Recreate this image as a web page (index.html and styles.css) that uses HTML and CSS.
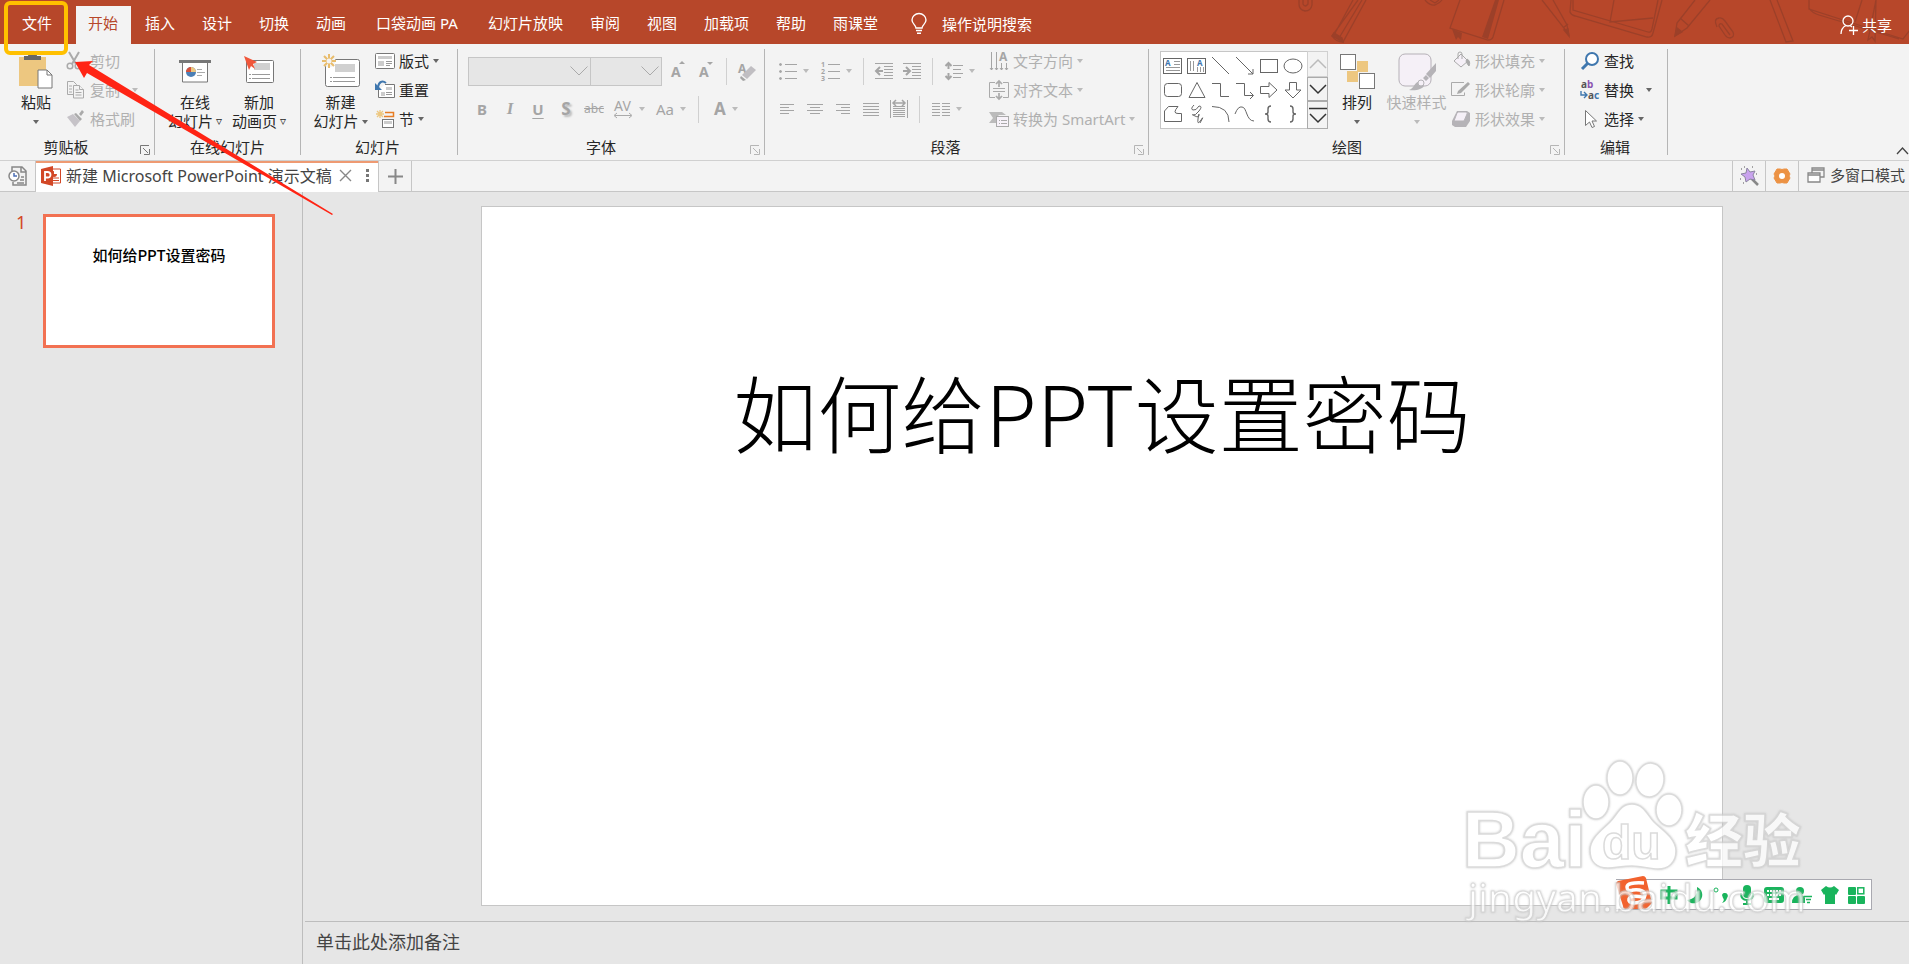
FILE: index.html
```html
<!DOCTYPE html>
<html lang="zh-CN">
<head>
  <meta charset="UTF-8">
  <meta name="viewport" content="width=device-width, initial-scale=1.0">
  <title>新建 Microsoft PowerPoint 演示文稿</title>
  <link rel="stylesheet" href="styles.css">
</head>
<body>

<header class="titlebar">
  <svg class="doodles" width="620" height="44" viewBox="1289 0 620 44" fill="none" stroke="#9c4029" stroke-width="1.3">
    <path d="M1299 0v4q0 6 6 7q6 0 7-6V0M1303 0v4q2 4 5 0V0"/>
    <path d="M1358 0L1332 36q4 6 11 6L1366 0M1353 0L1334 35M1362 0L1339 38"/>
    <path d="M1332 36l11 6-1-4-8-5z" fill="#9c4029"/>
    <path d="M1425 0q5 6 10 5q5-2 7-5M1430 0l5 3 4-3"/>
    <path d="M1460 0L1450 28l38 12q4 0 5-3L1504 0"/>
    <path d="M1495 0L1482 37l6 2L1499 0zM1452 29l10 4-1 7-3-3-2 3z" fill="#9c4029" stroke="none"/>
    <path d="M1542 0l22 28 5 8-2-11L1553 0M1563 28l5-4"/>
    <path d="M1564 30l5 6-1-7z" fill="#9c4029"/>
    <path d="M1571 0l-1 12q1 3 5 4l72 21q5 1 6-4L1662 0M1573 0v10l75 22q3 1 4-3L1658 0M1614 0l-4 22 43-4"/>
    <path d="M1695 0l-18 23-2 13 12-8L1710 0M1680 18l9 8"/>
    <path d="M1677 28l-2 8 7-4z" fill="#9c4029"/>
    <path d="M1717 27q-4-8 2-9q3-1 6 3l8 11q2 5-3 6q-3 0-5-3l-6-9q0-3 3-2l8 11"/>
    <path d="M1770 0l16 42 7-1L1777 0"/>
    <path d="M1809 0v9l34 11 60 19 7-9M1809 8q3 5 10 7l80 24M1862 0l-7 22M1876 0l-8 40 4-3 3 4 1-41"/>
  </svg>
  <nav class="tabs">
    <button class="tab">文件</button>
    <button class="tab active">开始</button>
    <button class="tab">插入</button>
    <button class="tab">设计</button>
    <button class="tab">切换</button>
    <button class="tab">动画</button>
    <button class="tab wide">口袋动画 PA</button>
    <button class="tab">幻灯片放映</button>
    <button class="tab">审阅</button>
    <button class="tab">视图</button>
    <button class="tab">加载项</button>
    <button class="tab">帮助</button>
    <button class="tab">雨课堂</button>
  </nav>
  <button class="tell-me">
    <svg width="16" height="22" viewBox="0 0 16 22" fill="none" stroke="#fff" stroke-width="1.4"><path d="M5 15c0-3-4-4-4-8a7 6.500 0 0 1 14 0c0 4-4 5-4 8zM5 17.500h6M6 20.300h4"/></svg>
    操作说明搜索
  </button>
  <button class="share">
    <svg width="18" height="20" viewBox="0 0 18 20" fill="none" stroke="#fff" stroke-width="1.300"><circle cx="8" cy="6" r="5"/><path d="M1 19c0-4 2-7 5-8.500M10 10.500l2 1.500M9 15.500h9M13.500 11v9"/></svg>
    共享
  </button>
</header>

<section class="ribbon">
  <div class="group clipboard">
    <div class="group-body">
      <button class="big">
        <svg width="36" height="38" viewBox="0 0 36 38"><path d="M1 5h27v29H1z" fill="#edc780"/><path d="M6 8V4h4q0-3 4.500-3T19 4h4v4z" fill="#666"/><path d="M20 18h9l5 5v13H20z" fill="#fff" stroke="#777"/><path d="M29 18v5h5" fill="none" stroke="#777"/></svg>
        <span>粘贴</span>
        <span><i class="caret"></i></span>
      </button>
      <div class="rows">
        <button class="tool off">
          <svg width="20" height="20" viewBox="0 0 20 20" fill="none" stroke="#aaa" stroke-width="1.500"><circle cx="4" cy="15" r="2.800"/><circle cx="12" cy="15" r="2.800"/><path d="M13 1L6 13M3 1l7 12" stroke-width="2"/></svg>剪切</button>
        <button class="tool off">
          <svg width="20" height="20" viewBox="0 0 20 20" fill="#f3f3f3" stroke="#aaa"><path d="M1.500 1.500h6l3 3v10h-9z"/><path d="M7.500 5.500h6l4 4v8.500h-10z"/><path d="M13.500 5.500v4h4M3 6h3M3 9h3M3 12h3M9.500 10h3M9.500 12.500h6M9.500 15h6"/></svg>复制<i class="caret gap"></i></button>
        <button class="tool off">
          <svg width="20" height="20" viewBox="0 0 20 20"><path d="M1 8l6-3 7 7-5 6z" fill="#c6c3c8"/><path d="M8 5l2-1 6 6-2 2zM13 5l3-4 2 2-3 4z" fill="#aaa"/></svg>格式刷</button>
      </div>
    </div>
    <div class="group-name">剪贴板</div>
    <button class="launcher dark" aria-label="剪贴板选项"><svg width="10" height="10" viewBox="0 0 10 10" fill="none" stroke="currentColor"><path d="M.5 9V.5H9M3 3l5 5M9.500 4v5.500H4"/></svg></button>
  </div>

  <div class="group online">
    <div class="group-body">
      <button class="big">
        <svg width="32" height="32" viewBox="0 0 32 32"><path d="M0 5h32v3H0z" fill="#777"/><path d="M3.500 8v19h25V8" fill="#fff" stroke="#777"/><circle cx="12" cy="17" r="5" fill="#4c7fb5"/><path d="M12 17v-5a5 5 0 0 0-5 5z" fill="#d4503a"/><path d="M12 17v-5a5 5 0 0 1 5 5z" fill="#edc780"/><path d="M18 14.500h5M18 17.500h8M18 20.500h5" stroke="#aaa"/></svg>
        <span>在线</span>
        <span>幻灯片 <small>▿</small></span>
      </button>
      <button class="big">
        <svg width="32" height="32" viewBox="0 0 32 32"><rect x="3.500" y="5.500" width="27" height="22" rx="1" fill="#fff" stroke="#777"/><path d="M11 8h16v7H11z" fill="#d0d0d0"/><path d="M6 19.500h21M6 23.500h21" stroke="#999" stroke-dasharray="2 1 30"/><path d="M1 1l13 6-4 2 2 5-4-3-2 4z" fill="#f0563a"/></svg>
        <span>新加</span>
        <span>动画页 <small>▿</small></span>
      </button>
    </div>
    <div class="group-name">在线幻灯片</div>
  </div>

  <div class="group slides">
    <div class="group-body">
      <button class="big">
        <svg width="38" height="36" viewBox="0 0 38 36"><rect x="3.500" y="6.500" width="34" height="27" rx="2" fill="#fff" stroke="#777"/><path d="M13 11h20v8H13z" fill="#d0d0d0"/><path d="M8 24.500h25M8 28.500h25" stroke="#999" stroke-dasharray="2 1 30"/><circle cx="7" cy="8" r="6.500" fill="#f3f3f3"/><path d="M7 1v14M0 8h14M2 3l10 10M12 3L2 13" stroke="#e8bc6c" stroke-width="2"/><circle cx="7" cy="8" r="2.500" fill="#f3f3f3"/></svg>
        <span>新建</span>
        <span>幻灯片<i class="caret"></i></span>
      </button>
      <div class="rows">
        <button class="tool">
          <svg width="20" height="20" viewBox="0 0 20 20"><rect x=".500" y="2.500" width="19" height="15" rx="1" fill="#fff" stroke="#777"/><path d="M3 5h14v3H3zM3 10h6v5H3z" fill="#ccc"/><path d="M11 10.500h6M11 12.500h6M11 14.500h4" stroke="#999"/></svg>版式<i class="caret"></i></button>
        <button class="tool">
          <svg width="20" height="20" viewBox="0 0 20 20"><path d="M10 4.500h9.500v13h-16V10" fill="#fff" stroke="#777"/><path d="M11 7h6v3h-6zM6 12h4v4H6z" fill="#ccc"/><path d="M11 12.500h6M11 14.500h6" stroke="#999"/><path d="M11 3C7 0 4 2 3 7" fill="none" stroke="#3f77ae" stroke-width="2"/><path d="M0 3v7h7z" fill="#3f77ae"/></svg>重置</button>
        <button class="tool">
          <svg width="20" height="20" viewBox="0 0 20 20"><path d="M5 1v8M1 5h8M2 2l6 6M8 2L2 8" stroke="#edc780" stroke-width="1.300"/><path d="M10 3.500h8.500v4H9" fill="none" stroke="#e77c22" stroke-width="1.500"/><rect x="7.500" y="10.500" width="11" height="8" fill="#fff" stroke="#777"/><path d="M9 12h8v3H9z" fill="#ccc"/></svg>节<i class="caret"></i></button>
      </div>
    </div>
    <div class="group-name">幻灯片</div>
  </div>

  <div class="group font">
    <div class="group-body stack">
      <div class="line">
        <label class="combo family"><select aria-label="字体" disabled></select><svg width="18" height="10" viewBox="0 0 18 10" fill="none" stroke="#aaa"><path d="M.5 .5L9 9l8.500-8.500"/></svg></label>
        <label class="combo size"><select aria-label="字号" disabled></select><svg width="18" height="10" viewBox="0 0 18 10" fill="none" stroke="#aaa"><path d="M.5 .5L9 9l8.500-8.500"/></svg></label>
        <button class="ic w28 off" aria-label="增大字号"><svg width="18" height="20" viewBox="0 0 18 20" fill="#a5a5a5"><text x="2" y="16" font-size="14" class="heavy">A</text><path d="M10 3l3-3 3 3z"/></svg></button>
        <button class="ic w28 off" aria-label="减小字号"><svg width="18" height="20" viewBox="0 0 18 20" fill="#a5a5a5"><text x="2" y="16" font-size="14" class="heavy">A</text><path d="M10 1l3 3 3-3z"/></svg></button>
        <i class="sep"></i>
        <button class="ic w28 off" aria-label="清除格式"><svg width="20" height="20" viewBox="0 0 20 20" fill="#a5a5a5"><text x="1" y="12" font-size="12" class="heavy">A</text><path d="M5 14l9-9 5 4-9 9z" fill="#c0bec2"/><path d="M4 15l5 4-3 1-3-3z"/></svg></button>
      </div>
      <div class="line">
        <button class="ic w28 off bold">B</button>
        <button class="ic w28 off italic">I</button>
        <button class="ic w28 off under">U</button>
        <button class="ic w28 off shadow">S</button>
        <button class="ic w28 off strike">abc</button>
        <button class="ic w42 off" aria-label="字符间距"><svg width="20" height="20" viewBox="0 0 20 20" fill="#a5a5a5"><text x="1" y="12" font-size="14">AV</text><path d="M2 16.500h16M4 14l-3 2.500L4 19M16 14l3 2.500-3 2.500" fill="none" stroke="#aaa"/></svg><i class="caret"></i></button>
        <button class="ic w42 off">Aa<i class="caret"></i></button>
        <i class="sep"></i>
        <button class="ic w42 off color">A<i class="caret"></i></button>
      </div>
    </div>
    <div class="group-name">字体</div>
    <button class="launcher" aria-label="字体选项"><svg width="10" height="10" viewBox="0 0 10 10" fill="none" stroke="currentColor"><path d="M.5 9V.5H9M3 3l5 5M9.500 4v5.500H4"/></svg></button>
  </div>

  <div class="group para">
    <div class="group-body">
      <div class="stack">
        <div class="line">
          <button class="ic w42 off" aria-label="项目符号"><svg width="18" height="18" viewBox="0 0 18 18" fill="#a5a5a5" stroke="#a5a5a5"><path d="M6 2.500h12M6 9.500h12M6 16.500h12"/><circle cx="1.500" cy="2.500" r="1"/><circle cx="1.500" cy="9.500" r="1"/><circle cx="1.500" cy="16.500" r="1"/></svg><i class="caret"></i></button>
          <button class="ic w42 off" aria-label="编号"><svg width="19" height="20" viewBox="0 0 19 20" fill="#a5a5a5"><path d="M7 3.500h12M7 10.500h12M7 17.500h12" stroke="#a5a5a5"/><text x="0" y="6" font-size="7" class="heavy">1</text><text x="0" y="13" font-size="7" class="heavy">2</text><text x="0" y="20" font-size="7" class="heavy">3</text></svg><i class="caret"></i></button>
          <i class="sep"></i>
          <button class="ic w28 off" aria-label="减少缩进"><svg width="18" height="18" viewBox="0 0 18 18" fill="none" stroke="#a5a5a5"><path d="M0 1.500h18M9 4.500h9M9 7.500h9M9 10.500h9M9 13.500h9M0 16.500h18"/><path d="M8 9H1M5 5L1 9l4 4" stroke-width="2"/></svg></button>
          <button class="ic w28 off" aria-label="增加缩进"><svg width="18" height="18" viewBox="0 0 18 18" fill="none" stroke="#a5a5a5"><path d="M0 1.500h18M9 4.500h9M9 7.500h9M9 10.500h9M9 13.500h9M0 16.500h18"/><path d="M0 9h7M3 5l4 4-4 4" stroke-width="2"/></svg></button>
          <i class="sep"></i>
          <button class="ic w42 off" aria-label="行距"><svg width="18" height="20" viewBox="0 0 18 20" fill="none" stroke="#a5a5a5"><path d="M8 4.500h10M8 8.500h8M8 12.500h10M8 16.500h8"/><path d="M3.500 2v6M3.500 12v6M.5 5l3-3 3 3M.5 15l3 3 3-3" stroke-width="2"/></svg><i class="caret"></i></button>
        </div>
        <div class="line">
          <button class="ic w28 off" aria-label="左对齐"><svg width="16" height="12" viewBox="0 0 16 12" stroke="#a5a5a5"><path d="M1 1.500h14M1 4.500h9M1 7.500h14M1 10.500h9"/></svg></button>
          <button class="ic w28 off" aria-label="居中"><svg width="16" height="12" viewBox="0 0 16 12" stroke="#a5a5a5"><path d="M0 1.500h16M3 4.500h10M0 7.500h16M3 10.500h10"/></svg></button>
          <button class="ic w28 off" aria-label="右对齐"><svg width="16" height="12" viewBox="0 0 16 12" stroke="#a5a5a5"><path d="M1 1.500h14M6 4.500h9M1 7.500h14M6 10.500h9"/></svg></button>
          <button class="ic w28 off" aria-label="两端对齐"><svg width="16" height="14" viewBox="0 0 16 14" stroke="#a5a5a5"><path d="M0 1.500h16M0 4.500h16M0 7.500h16M0 10.500h16M0 13.500h16"/></svg></button>
          <button class="ic w28 off" aria-label="分散对齐"><svg width="18" height="18" viewBox="0 0 18 18" fill="none" stroke="#a5a5a5"><path d="M.5 0v18M17.500 0v18M3 6.500h12M3 8.500h12M3 10.500h12M3 12.500h12M3 14.500h12M3 16.500h12"/><path d="M3 3h12M6 0L3 3l3 3M12 0l3 3-3 3" stroke-width="1.500"/></svg></button>
          <i class="sep"></i>
          <button class="ic w42 off" aria-label="分栏"><svg width="18" height="14" viewBox="0 0 18 14" stroke="#a5a5a5"><path d="M0 1.500h8M0 4.500h8M0 7.500h8M0 10.500h8M0 13.500h8M10 1.500h8M10 4.500h8M10 7.500h8M10 10.500h8M10 13.500h8"/></svg><i class="caret"></i></button>
        </div>
      </div>
      <div class="rows">
        <button class="tool off">
          <svg width="20" height="20" viewBox="0 0 20 20" fill="none" stroke="#a5a5a5"><path d="M2.500 1v18M7.500 1v18M12.500 12v7M17.500 12v7M1 17l1.500 2L4 17M6 17l1.500 2L9 17M11 17l1.500 2 1.500-2M16 17l1.500 2 1.500-2"/><text x="10" y="10" font-size="12" class="heavy" fill="#a5a5a5" stroke="none">A</text></svg>文字方向<i class="caret"></i></button>
        <button class="tool off">
          <svg width="20" height="20" viewBox="0 0 20 20" fill="none" stroke="#aaa"><path d="M6 2.500H.5v15H6M14 2.500h5.500v15H14M4 8.500h12M4 11.500h12"/><path d="M10 1v6M10 13v6M7 4l3-3 3 3M7 16l3 3 3-3" stroke-width="1.700"/></svg>对齐文本<i class="caret"></i></button>
        <button class="tool off">
          <svg width="20" height="20" viewBox="0 0 20 20"><path d="M0 3h13l4 3h-7l-3 3v5H0l4-5z" fill="#bbb"/><rect x="7.500" y="7.500" width="12" height="10" fill="#f7f2f9" stroke="#aaa"/><path d="M10 11.500h1M12 11.500h6M10 14.500h1M12 14.500h6" stroke="#aaa"/></svg>转换为 SmartArt<i class="caret"></i></button>
      </div>
    </div>
    <div class="group-name">段落</div>
    <button class="launcher" aria-label="段落选项"><svg width="10" height="10" viewBox="0 0 10 10" fill="none" stroke="currentColor"><path d="M.5 9V.5H9M3 3l5 5M9.500 4v5.500H4"/></svg></button>
  </div>

  <div class="group draw">
    <div class="group-body">
      <div class="gallery">
        <div class="shapes">
          <button aria-label="文本框"><svg viewBox="0 0 20 18"><rect x=".500" y="1.500" width="18" height="15"/><path d="M11 4.500h6M11 7.500h6M3 10.500h14M3 13.500h14" stroke="#999"/><text x="2" y="9" font-size="8" class="heavy blue">A</text></svg></button>
          <button aria-label="竖排文本框"><svg viewBox="0 0 20 18"><rect x=".500" y="1.500" width="18" height="15"/><path d="M3.500 4v10M6.500 4v10M10.500 10v5M13.500 10v5M16.500 10v5" stroke="#999"/><text x="10" y="9" font-size="8" class="heavy blue">A</text></svg></button>
          <button aria-label="直线"><svg viewBox="0 0 20 18"><path d="M1 0l17 17"/></svg></button>
          <button aria-label="箭头"><svg viewBox="0 0 20 18"><path d="M1 0l17 17M18 12v5h-5"/></svg></button>
          <button aria-label="矩形"><svg viewBox="0 0 20 18"><rect x="1.500" y="2.500" width="17" height="13"/></svg></button>
          <button aria-label="椭圆"><svg viewBox="0 0 20 18"><ellipse cx="10" cy="9" rx="9" ry="7"/></svg></button>
          <button aria-label="圆角矩形"><svg viewBox="0 0 20 18"><rect x="1.500" y="2.500" width="17" height="13" rx="3"/></svg></button>
          <button aria-label="三角形"><svg viewBox="0 0 20 18"><path d="M10 1.500l8 15H2z"/></svg></button>
          <button aria-label="肘形连接符"><svg viewBox="0 0 20 18"><path d="M1 2.500h8.500v13H18"/></svg></button>
          <button aria-label="肘形箭头"><svg viewBox="0 0 20 18"><path d="M1 2.500h8.500v12H18M15 11l3.500 3.500L15 18"/></svg></button>
          <button aria-label="右箭头"><svg viewBox="0 0 20 18"><path d="M1.500 5.500H10V1.500l8 7.500-8 7.500v-4H1.500z"/></svg></button>
          <button aria-label="下箭头"><svg viewBox="0 0 20 18"><path d="M6.500 1.500h7V9H18l-8 8-8-8h4.500z"/></svg></button>
          <button aria-label="任意多边形"><svg viewBox="0 0 20 18"><path d="M5.500 1.500H15q-6 7 0 7h3.500v8h-17V6z"/></svg></button>
          <button aria-label="自由曲线"><svg viewBox="0 0 20 18"><path d="M7 0q-4 4-1 5t6-4q4 0 0 5t-6 4 2 1 4-1-1 4 3 1-1 3"/></svg></button>
          <button aria-label="弧形"><svg viewBox="0 0 20 18"><path d="M1 1.500q17 0 17 15.500"/></svg></button>
          <button aria-label="曲线"><svg viewBox="0 0 20 18"><path d="M0 9q3-8 7-7c5 0 4 14 12 14"/></svg></button>
          <button aria-label="左大括号"><svg viewBox="0 0 20 18"><path d="M12 1q-3 0-3 3v3q0 2-3 2 3 0 3 2v3q0 3 3 3" stroke-width="1.400"/></svg></button>
          <button aria-label="右大括号"><svg viewBox="0 0 20 18"><path d="M7 1q3 0 3 3v3q0 2 3 2-3 0-3 2v3q0 3-3 3" stroke-width="1.400"/></svg></button>
        </div>
        <div class="scroller">
          <button class="faint" aria-label="上一行"><svg width="18" height="10" viewBox="0 0 18 10"><path d="M1 9l8-8 8 8"/></svg></button>
          <button aria-label="下一行"><svg width="18" height="10" viewBox="0 0 18 10"><path d="M1 1l8 8 8-8"/></svg></button>
          <button aria-label="更多形状"><svg width="18" height="16" viewBox="0 0 18 16"><path d="M0 1.500h18M1 7l8 8 8-8"/></svg></button>
        </div>
      </div>
      <button class="big">
        <svg width="36" height="36" viewBox="0 0 36 36" stroke="#777"><path d="M18 8h11v11H18zM8 18h11v11H8z" fill="#edc780" stroke="none"/><rect x="1.500" y="1.500" width="15" height="15" fill="#fff"/><rect x="20.500" y="20.500" width="15" height="15" fill="#fff"/></svg>
        <span>排列</span>
        <span><i class="caret"></i></span>
      </button>
      <button class="big off">
        <svg width="38" height="38" viewBox="0 0 38 38"><rect x="1" y="2" width="32" height="32" rx="6" fill="#f5f0f7" stroke="#b5b0b7"/><path d="M38 11v8l-6 7-4-4zM28 23l3 3-3 3-3-3z" fill="#b5b3b7"/><path d="M11 38c5-1 5-8 11-9l4 4c0 4-8 6-15 5z" fill="#b5b3b7"/><circle cx="23" cy="31" r="3" fill="#f5f0f7" stroke="#b5b3b7"/></svg>
        <span>快速样式</span>
        <span><i class="caret"></i></span>
      </button>
      <div class="rows">
        <button class="tool off">
          <svg width="20" height="20" viewBox="0 0 20 20" fill="#f5f0f7" stroke="#aaa"><path d="M3 10l7-7 7 7-7 6z"/><path d="M7 8V3q0-2 2-2t2 2v5" fill="none"/><path d="M16 8q4 2 2 7-2-2-3-5z" fill="#aaa"/></svg>形状填充<i class="caret"></i></button>
        <button class="tool off">
          <svg width="20" height="20" viewBox="0 0 20 20" fill="none" stroke="#aaa"><path d="M13 2.500H.5v13h13v-3"/><path d="M7 11l10-9 2 2-9 9-4 1z" fill="#aaa" stroke="none"/></svg>形状轮廓<i class="caret"></i></button>
        <button class="tool off">
          <svg width="20" height="20" viewBox="0 0 20 20"><path d="M6 2h10l3 2v8l-4 6H4l-3-2v-4z" fill="#b5b3b7"/><path d="M7 3h8q2 0 1 2l-3 7H3l3-8z" fill="#f5f0f7" stroke="#b5b3b7"/></svg>形状效果<i class="caret"></i></button>
      </div>
    </div>
    <div class="group-name">绘图</div>
    <button class="launcher" aria-label="绘图选项"><svg width="10" height="10" viewBox="0 0 10 10" fill="none" stroke="currentColor"><path d="M.5 9V.5H9M3 3l5 5M9.500 4v5.500H4"/></svg></button>
  </div>

  <div class="group edit">
    <div class="group-body">
      <div class="rows">
        <button class="tool">
          <svg width="20" height="20" viewBox="0 0 20 20" fill="#fff" stroke="#3f77ae"><circle cx="12" cy="8" r="6" stroke-width="2"/><path d="M8 12l-6 6" stroke-width="3"/></svg>查找</button>
        <button class="tool">
          <svg width="20" height="20" viewBox="0 0 20 20" font-size="10"><text x="1" y="8" class="heavy"><tspan fill="#555">a</tspan><tspan fill="#8a55b0">b</tspan></text><text x="8" y="19" class="heavy"><tspan fill="#555">a</tspan><tspan fill="#3f77ae">c</tspan></text><path d="M1 11v4h6M4 12l3 3-3 3" fill="none" stroke="#3f77ae" stroke-width="1.400"/></svg>替换<i class="caret gap"></i></button>
        <button class="tool">
          <svg width="20" height="20" viewBox="0 0 20 20"><path d="M5.500 1.500v15l4-3.500 2.500 5.500 2.500-1-2.500-5.500h4.500z" fill="#fff" stroke="#777"/></svg>选择<i class="caret"></i></button>
      </div>
    </div>
    <div class="group-name">编辑</div>
  </div>

  <button class="collapse" aria-label="折叠功能区"><svg width="13" height="8" viewBox="0 0 13 8" fill="none" stroke="#444" stroke-width="1.300"><path d="M1 7l5.500-6L12 7"/></svg></button>
</section>

<div class="docbar">
  <button class="cell recent" aria-label="最近文档"><svg width="20" height="20" viewBox="0 0 20 20" fill="none" stroke="#888" stroke-width="1.500"><path d="M4 5V1h10l4 4v14H5v-3M13 1v5h5M13 11h3M12 14h4M9 17h7"/><circle cx="6" cy="10" r="5" fill="#fff"/><path d="M6 7v3h3" stroke="#4c6fb5"/></svg></button>
  <div class="doc">
    <svg width="20" height="20" viewBox="0 0 20 20"><path d="M10 3h9.500v14H10z" fill="#fff" stroke="#d24726"/><path d="M12 12h6M12 14.500h6" stroke="#d24726"/><path d="M13 5a3 3 0 1 0 3 3h-3z" fill="#d24726"/><path d="M0 3l12-3v20L0 17z" fill="#d24726"/><path d="M4 15V6h2.500q3 0 3 2.800T6.500 11.500H4" fill="none" stroke="#fff" stroke-width="1.800"/></svg>
    <a href="#slide">新建 Microsoft PowerPoint 演示文稿</a>
    <button aria-label="关闭"><svg width="13" height="13" viewBox="0 0 13 13" stroke="#888" stroke-width="1.400"><path d="M1 1l11 11M12 1L1 12"/></svg></button>
    <button aria-label="更多"><svg width="4" height="14" viewBox="0 0 4 14" fill="#777"><path d="M0 0h3v3H0zM0 5h3v3H0zM0 10h3v3H0z"/></svg></button>
  </div>
  <button class="cell" aria-label="新建标签"><svg width="15" height="15" viewBox="0 0 15 15" stroke="#888" stroke-width="2"><path d="M7.500 0v15M0 7.500h15"/></svg></button>
  <div class="spacer"></div>
  <button class="cell" aria-label="魔法棒"><svg width="20" height="20" viewBox="0 0 20 20"><path d="M11 11l8 8" stroke="#888" stroke-width="2.500"/><path d="M8 2l3 4 5-1-2 4 2 5-5-1-4 3-1-5-4-3 5-1z" fill="#c9a3ee" stroke="#8b85a0"/><path d="M2 3h1M5 1h1M13 1h1M1 13h1M17 8h1M4 17h1" stroke="#888" stroke-width="1.500"/></svg></button>
  <button class="cell" aria-label="设置"><svg width="18" height="18" viewBox="0 0 18 18"><path d="M4 2h3q2 1 4 0h3l3 5q-2 2 0 4l-3 5h-3q-2-1-4 0H4l-3-5q2-2 0-4z" fill="#ec9244" stroke="#ec9244" stroke-linejoin="round"/><circle cx="9" cy="9" r="3" fill="#fff"/></svg></button>
  <button class="cell mode"><svg width="18" height="16" viewBox="0 0 18 16" stroke="#888" fill="#f3f3f3" stroke-width="1.300"><path d="M5 1h12v9H5zM5 3h12"/><path d="M1 6h12v9H1zM1 8h12" fill="#fff"/></svg>多窗口模式</button>
</div>

<main class="work">
  <aside class="thumbs">
    <span class="num">1</span>
    <button class="thumb">如何给PPT设置密码</button>
  </aside>
  <section class="editor">
    <div class="canvas">
      <article class="slide" id="slide"><h1>如何给PPT设置密码</h1></article>
    </div>
    <div class="notes">单击此处添加备注</div>
  </section>
</main>

<div class="ime">
  <svg class="sogou" width="36" height="34" viewBox="0 0 36 34"><path d="M2 5L27 0q2 0 3 2l6 25-5 5q-1 1-4 1H10q-3 0-3-3L0 8q0-2 2-3z" fill="#f2622e"/><path d="M28 7q-17-1-17 4t6 3q12-1 12 5-1 8-11 8-6 0-5-4t14-2" fill="none" stroke="#fff" stroke-width="3.500"/></svg>
  <svg width="18" height="20" viewBox="0 0 18 20" fill="none" stroke="#19b45c" stroke-width="3"><path d="M2 6h14v7H2zM9 1v18"/></svg>
  <svg width="18" height="20" viewBox="0 0 18 20" fill="#19b45c"><path d="M11 2a8.500 8.500 0 1 1-10 13Q12 14 11 2z"/></svg>
  <svg width="18" height="20" viewBox="0 0 18 20" fill="#19b45c"><circle cx="4" cy="5" r="2" fill="none" stroke="#19b45c"/><path d="M10 10a3 3 0 1 1 5 3q-1 4-5 5 3-3 1-5z"/></svg>
  <svg width="18" height="20" viewBox="0 0 18 20" fill="#19b45c"><rect x="5" y="0" width="8" height="13" rx="4"/><path d="M3 8q0 7 6 7t6-7M9 15v4M5 19h8" fill="none" stroke="#19b45c" stroke-width="2"/></svg>
  <svg width="20" height="20" viewBox="0 0 20 20"><rect y="2" width="20" height="16" rx="3" fill="#19b45c"/><path d="M3 6h14M3 10h14" stroke="#fff" stroke-width="2" stroke-dasharray="2 1"/><path d="M5 14h10" stroke="#fff" stroke-width="2"/></svg>
  <svg width="21" height="20" viewBox="0 0 21 20" fill="#19b45c"><circle cx="8" cy="6" r="4"/><path d="M0 18q0-8 8-8 4 0 5 3v5z"/><path d="M12 11.500h8M14 14.500h5M15 17.500h3" stroke="#19b45c" stroke-width="1.500"/></svg>
  <svg width="18" height="20" viewBox="0 0 18 20" fill="#19b45c"><path d="M5 1q4 3 8 0l5 4-3 5-1-1v10H4V9l-1 1-3-5z"/></svg>
  <svg width="18" height="20" viewBox="0 0 18 20" fill="#19b45c"><rect x="1" y="2" width="8" height="8" rx="1"/><rect x="1" y="11" width="8" height="8" rx="1"/><rect x="10" y="11" width="8" height="8" rx="1"/><rect x="10.800" y="2.800" width="6" height="6" fill="#fff" stroke="#19b45c" stroke-width="1.500"/></svg>
</div>

<svg class="watermark" width="350" height="172" viewBox="0 0 350 172">
  <g class="mark">
    <text x="2" y="107" class="latin" font-size="80">Bai</text>
    <ellipse cx="136" cy="42" rx="13" ry="17"/>
    <ellipse cx="160" cy="18" rx="13" ry="17"/>
    <ellipse cx="190" cy="20" rx="14" ry="17" transform="rotate(8 190 20)"/>
    <ellipse cx="209" cy="50" rx="13" ry="16"/>
    <path d="M172 44c12 0 16 12 22 18s22 16 22 29c0 12-8 18-18 18-8 0-16-3-26-3s-16 2-24 2c-11 0-18-6-18-18 0-12 12-20 20-28s10-18 22-18z"/>
    <text x="142" y="99" class="latin" font-size="48">du</text>
    <text x="225" y="102" class="han" font-size="58">经验</text>
    <text x="8" y="152" class="site" font-size="39">jingyan.baidu.com</text>
  </g>
</svg>

<div class="highlight"></div>
<svg class="pointer" width="340" height="220" viewBox="0 0 340 220"><path d="M75 62l18-1-4 4 244 149-1 1L87 73l-3 5z" fill="#ff2414"/></svg>

</body>
</html>
```
FILE: styles.css
```css
* { box-sizing: border-box; }
body {
  margin: 0;
  height: 100vh;
  display: flex;
  flex-direction: column;
  position: relative;
  overflow: hidden;
  font-family: "Noto Sans", "Noto Sans CJK SC", sans-serif;
  font-size: 15px;
  line-height: 20px;
  color: #262626;
  background: #e6e6e6;
}
button {
  font: inherit;
  color: inherit;
  background: none;
  border: 0;
  padding: 0;
  white-space: nowrap;
}
svg { flex: none; overflow: visible; }
.doodles, .pointer { overflow: hidden; }
.heavy { font-weight: 700; }
.blue { fill: #3f77ae; stroke: none; }
.off { color: #b0b0b0; }

/* title bar */
.titlebar {
  position: relative;
  flex: none;
  height: 44px;
  display: flex;
  background: #b7472a;
  color: #fff;
}
.doodles { position: absolute; top: 0; right: 0; }
.tabs { display: flex; padding: 6px 0 0 8px; }
.tab { padding: 0 13px 4px 14px; }
.tab:first-child { margin-right: 11px; }
.tab.active { background: #f3f3f3; color: #b7472a; padding: 0 13px 4px 12px; }
.tab.wide { padding: 0 16px 4px 17px; }
.tell-me { display: flex; align-items: center; gap: 15px; margin-left: 20px; padding-top: 4px; }
.share { position: relative; display: flex; align-items: center; gap: 4px; margin: 6px 17px 0 auto; }

/* ribbon */
.ribbon {
  position: relative;
  flex: none;
  height: 117px;
  display: flex;
  padding: 5px 0;
  background: #f3f3f3;
  border-bottom: 1px solid #d0d0d0;
}
.group {
  position: relative;
  display: flex;
  flex-direction: column;
  border-right: 1px solid #b5b5b5;
}
.group-body { flex: none; display: flex; align-items: flex-start; height: 88px; }
.group-name { text-align: center; padding-right: 30px; }
.clipboard { width: 155px; padding-left: 10px; }
.online { width: 146px; padding-left: 8px; }
.slides { width: 157px; padding-left: 8px; }
.font { width: 307px; padding-left: 10px; }
.para { width: 384px; padding-left: 8px; }
.draw { width: 416px; padding-left: 11px; }
.edit { width: 103px; padding-left: 15px; }
.clipboard .group-name { padding-right: 32px; }
.online .group-name { padding-right: 8px; }
.slides .group-name { padding-right: 11px; }
.edit .group-name { padding-right: 17px; }
.launcher { position: absolute; right: 4px; bottom: 0; line-height: 0; color: #b5b5b5; }
.launcher.dark { color: #777; }

.big {
  display: grid;
  grid-template-rows: 44px 19px 19px;
  justify-items: center;
  align-items: center;
  line-height: 19px;
  min-width: 52px;
}
.big span { display: flex; align-items: center; gap: 3px; min-height: 19px; }
.big small { font-family: "DejaVu Sans"; font-size: 12px; }
.online .big { width: 64px; }
.slides .big { width: 63px; }
.draw .big { width: 58px; }
.draw .big.off { width: 61px; }

.rows { display: grid; grid-template-rows: repeat(3, 29px); margin: -3px 0 0 4px; }
.slides .rows { margin-left: 3px; }
.para .rows { margin-left: 8px; }
.edit .rows { margin-left: 0; }
.tool { display: flex; align-items: center; gap: 4px; }
.caret {
  flex: none;
  border: 3px solid transparent;
  border-top: 4px solid #666;
  border-bottom: 0;
}
.off .caret { border-top-color: #bbb; }
.caret.gap { margin-left: 8px; }

.stack { display: flex; flex-direction: column; padding-top: 3px; }
.line { display: flex; align-items: center; height: 38px; }
.sep { width: 1px; height: 27px; margin: 0 6px; background: #d0d0d0; }
.ic { display: flex; align-items: center; justify-content: center; gap: 6px; height: 28px; }
.w28 { width: 28px; }
.w42 { width: 42px; }
.ic.off { color: #a5a5a5; }
.bold { font-weight: 700; }
.color { font-weight: 700; font-size: 17px; }
.italic { font: italic 700 17px "Liberation Serif", serif; }
.under { text-decoration: underline; text-underline-offset: 3px; font-weight: 700; }
.shadow { font-weight: 700; font-size: 17px; text-shadow: 2px 2px 2px #bbb; }
.strike { text-decoration: line-through; font-size: 12px; }

.combo { display: grid; align-items: center; height: 29px; }
.combo select, .combo svg { grid-area: 1 / 1; }
.combo svg { justify-self: end; margin-right: 3px; }
.combo select {
  appearance: none;
  width: 100%;
  height: 29px;
  background: #e6e6e6;
  border: 1px solid #c6c6c6;
  border-radius: 0;
  opacity: 1;
}
.family { width: 123px; }
.size { width: 72px; margin: 0 2px 0 -1px; }

.gallery {
  display: flex;
  width: 168px;
  height: 78px;
  margin-top: 2px;
  border: 1px solid #c6c6c6;
  background: #fff;
}
.shapes {
  flex: 1;
  display: grid;
  grid-template-columns: repeat(6, 24px);
  grid-template-rows: repeat(3, 24px);
  padding: 2px 0 0 2px;
}
.shapes button { display: grid; }
.shapes svg { width: 20px; height: 18px; place-self: center start; fill: none; stroke: #666; }
.scroller { width: 21px; display: grid; grid-template-rows: 26px 24px 1fr; margin: -1px -1px -1px 0; }
.scroller button { display: grid; place-items: center; border: 1px solid #ababab; background: #f3f3f3; }
.scroller svg { fill: none; stroke: #333; stroke-width: 1.5; }
.scroller .faint { border-color: #d0d0d0; }
.scroller .faint svg { stroke: #bbb; }
.collapse { margin-left: auto; align-self: flex-end; line-height: 0; }

/* document tabs */
.docbar {
  flex: none;
  height: 31px;
  display: flex;
  background: #f3f3f3;
  border-bottom: 1px solid #c6c6c6;
  color: #444;
}
.docbar .cell {
  width: 33px;
  display: flex;
  align-items: center;
  justify-content: center;
  gap: 5px;
  border-left: 1px solid #c6c6c6;
}
.docbar .recent { width: 36px; border-left: 0; border-right: 1px solid #c6c6c6; }
.docbar .mode { width: auto; padding: 0 4px 2px 8px; }
.docbar .spacer { flex: 1; border-left: 1px solid #c6c6c6; }
.doc {
  width: 342px;
  display: flex;
  align-items: center;
  padding: 0 8px 4px 5px;
  margin-bottom: -1px;
  background: #fff;
  border-top: 2px solid #ee9a72;
}
.doc a { flex: 1; margin-left: 5px; font-size: 16px; color: #444; text-decoration: none; white-space: nowrap; }
.doc button { line-height: 0; }
.doc button + button { margin-left: 14px; }

/* slides */
.work { flex: 1; min-height: 0; display: flex; }
.thumbs {
  width: 303px;
  display: flex;
  align-items: flex-start;
  padding: 22px 27px 0 16px;
  border-right: 1px solid #bdbdbd;
}
.num { width: 27px; font-size: 18px; line-height: 16px; color: #d24726; }
.thumb {
  flex: 1;
  aspect-ratio: 232 / 134;
  border: 3px solid #f27152;
  background: #fff;
  color: #000;
  font: 500 15px/20px "Noto Sans CJK SC", sans-serif;
  padding-bottom: 52px;
}
.editor { flex: 1; display: flex; flex-direction: column; }
.canvas { flex: 1; display: flex; padding: 14px 186px 15px 178px; }
.slide { flex: 1; background: #fff; border: 1px solid #c6c6c6; }
.slide h1 {
  margin: 140px 0 0;
  text-align: center;
  font: 300 84px/128px "Noto Sans CJK SC", sans-serif;
  color: #000;
}
.notes {
  margin-left: 2px;
  height: 43px;
  padding: 10px 11px;
  border-top: 1px solid #bdbdbd;
  font-size: 18px;
  color: #444;
}

/* floating things */
.ime {
  position: absolute;
  right: 37px;
  bottom: 54px;
  height: 31px;
  display: flex;
  align-items: center;
  gap: 8px;
  padding-right: 6px;
  background: #fff;
  border: 1px solid #a9a9b0;
  border-left: 0;
}
.sogou { margin: -4px 0 0 0; }
.watermark { position: absolute; right: 99px; bottom: 32px; opacity: .75; }
.mark { fill: #fff; stroke: #d0d0d0; stroke-width: 1.5; filter: drop-shadow(0 0 1px #bbb); }
.latin { font-family: "Liberation Sans", sans-serif; font-weight: 700; }
.han { font-family: "Noto Sans CJK SC", sans-serif; font-weight: 900; }
.site { font-family: "Noto Sans", sans-serif; stroke-width: 1; }
.highlight {
  position: absolute;
  left: 4px;
  top: 1px;
  width: 64px;
  height: 54px;
  border: 4px solid #ffc000;
  border-radius: 6px;
}
.pointer { position: absolute; left: 0; top: 0; pointer-events: none; }
```
